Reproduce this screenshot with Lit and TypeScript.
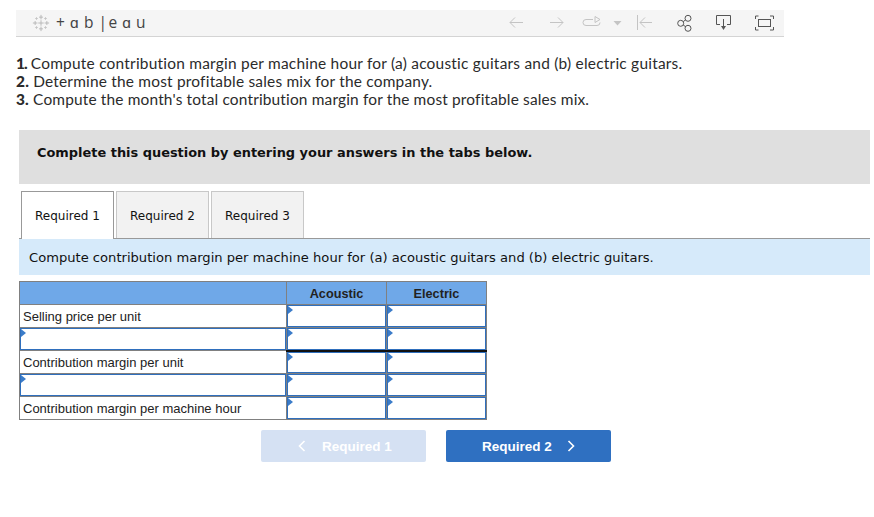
import { LitElement, html, css, svg } from "lit";
import { customElement } from "lit/decorators.js";

const logo = svg`<svg class="mark" width="18" height="18" viewBox="0 0 20 20" fill="none" stroke="#b4b4b4" stroke-width="1">
<path d="M10 1v5M7.800 3.500h4.400M10 14v5M7.800 16.500h4.400M1 10h5M3.500 7.800v4.400M14 10h5M16.500 7.800v4.400M10 7v6M7 10h6"/>
<path d="M5 3.500v3M3.500 5h3M15 3.500v3M13.500 5h3M5 13.500v3M3.500 15h3M15 13.500v3M13.500 15h3" stroke="#c4c4c4"/></svg>`;

@customElement("app-root")
export class AppRoot extends LitElement {
  static styles = css`
    :host { display: block; width: 874px; height: 517px; overflow: hidden; background: #fff; box-sizing: border-box; padding-top: 10px; font-family: "Liberation Sans", Arial, sans-serif; color: #222; }
    .bar { margin-left: 16px; width: 768px; height: 27px; box-sizing: border-box; background: #f5f5f5; border-bottom: 1px solid #d4d4d4; display: flex; align-items: center; padding-left: 16px; }
    .brand { display: flex; align-items: center; gap: 6px; font: 15.5px/1 "Open Sans", sans-serif; color: #444; }
    .brand span { letter-spacing: 5.2px; }
    .brand span.pipe { letter-spacing: 1.5px; }
    .brand span.tail { letter-spacing: 5px; }
    .brand .word { display: flex; letter-spacing: 0; }
    .tools { margin-left: auto; display: flex; height: 26px; align-self: flex-start; }
    .tools svg { display: block; }
    .questions { margin: 17px 0 0 16px; font: 15.45px/18px Lato, sans-serif; letter-spacing: 0.2px; color: #2b2b2b; }
    .questions b { font-weight: 900; }
    .questions b.one { letter-spacing: -1px; }
    .questions .first { letter-spacing: 0.23px; }
    .questions .last { letter-spacing: 0.16px; }
    .banner { margin: 22px 0 0 19px; width: 851px; height: 54px; box-sizing: border-box; background: #dfdfdf; display: flex; align-items: center; padding: 0 0 10px 18px; font: bold 12.93px "DejaVu Sans", sans-serif; color: #111; }
    .tabs { display: flex; gap: 2px; margin: 7px 0 0 21px; height: 48px; position: relative; z-index: 1; align-items: flex-start; }
    .tab { width: 93px; height: 47px; box-sizing: border-box; padding-top: 1px; background: #f2f2f2; border: 1px solid #c8c8c8; border-bottom: 0; display: flex; align-items: center; justify-content: center; font: 12px "DejaVu Sans", sans-serif; color: #111; }
    .tab.on { height: 48px; padding-top: 0; background: #fff; border-color: #999; }
    .info { margin: -1px 0 0 19px; height: 37px; box-sizing: border-box; border-top: 1px solid #999; background: #d6eafa; display: flex; align-items: center; padding-left: 10px; font: 13.1px "DejaVu Sans", sans-serif; color: #111; width: 851px; }
    table { margin: 6px 0 0 19px; border-collapse: collapse; table-layout: fixed; width: 467px; font: 13px "Liberation Sans", sans-serif; }
    col.a { width: 267px; } col.b { width: 100px; }
    td, th { height: 23px; padding: 0; border: 1px solid #808080; box-sizing: border-box; }
    th { background: #6fa8e8; font-size: 12.7px; color: #222; font-weight: bold; padding-top: 1px; }
    td.l { padding-left: 3px; color: #222; }
    td.i { position: relative; box-shadow: inset 0 0 0 1px #2f6fbd; }
    td.i::before { content: ""; position: absolute; left: 1px; top: 1px; border-left: 5px solid #3b7cc9; border-top: 4px solid transparent; border-bottom: 4px solid transparent; }
    tr.heavy td.v { border-bottom: 2px solid #111; }
    .nav { display: flex; gap: 20px; margin: 10px 0 0 261px; }
    .btn { width: 165px; height: 32px; box-sizing: border-box; border-radius: 2px; background: #2f70c1; color: #fff; font: bold 13.5px "Liberation Sans", sans-serif; display: flex; align-items: center; justify-content: center; gap: 15px; }
    .btn.off { background: #d5e1f3; gap: 16px; padding-left: 3px; }
    .btn svg { display: block; }
  `;

  row(label: string | null, heavy = false) {
    return html`<tr class=${heavy ? "heavy" : ""}>
      ${label ? html`<td class="l">${label}</td>` : html`<td class="i"></td>`}
      <td class="i v"></td><td class="i v"></td></tr>`;
  }

  render() {
    return html`
      <div class="bar">
        <div class="brand">${logo}<div class="word"><span>+ɑb</span><span class="pipe">|</span><span class="tail">eɑu</span></div></div>
        <div class="tools">
          <svg width="284" height="26" viewBox="500 10 284 26" fill="none" stroke="#c4c4c4" stroke-width="1">
            <path d="M510 22.500h13M515 17.500l-5 5 5 5M550 22.500h13M558 17.500l5 5-5 5"/>
            <path d="M593 19.500h-7a3 3 0 0 0 0 6h11a3 3 0 0 0 3-3"/>
            <path d="M595 16.500l5 3-5 3z"/>
            <path d="M613.500 21h8l-4 4.500z" fill="#c4c4c4" stroke="none"/>
            <path d="M637.500 15v15M640 22.500h12M645 17.500l-5 5 5 5"/>
            <g stroke="#555">
              <circle cx="680.700" cy="23.300" r="3"/><circle cx="688" cy="18.300" r="3"/><circle cx="688" cy="28.300" r="3"/>
              <path d="M683.200 21.600l2.300-1.600M683.200 25l2.300 1.600"/>
              <path d="M720 24.500h-3.500v-9h14v9H727M723.500 19v8"/>
              <path d="M721 26h5l-2.500 4z" fill="#555" stroke="none"/>
              <path d="M755.500 19v-3h3M770 16h3.500v3M755.500 27v3h3M773.500 27v3H770"/>
              <rect x="758.500" y="19.500" width="12" height="7"/>
            </g>
          </svg>
        </div>
      </div>
      <div class="questions">
        <div class="first"><b class="one">1.</b> Compute contribution margin per machine hour for (a) acoustic guitars and (b) electric guitars.</div>
        <div><b>2.</b> Determine the most profitable sales mix for the company.</div>
        <div class="last"><b>3.</b> Compute the month's total contribution margin for the most profitable sales mix.</div>
      </div>
      <div class="banner">Complete this question by entering your answers in the tabs below.</div>
      <div class="tabs">
        <div class="tab on">Required 1</div><div class="tab">Required 2</div><div class="tab">Required 3</div>
      </div>
      <div class="info">Compute contribution margin per machine hour for (a) acoustic guitars and (b) electric guitars.</div>
      <table>
        <colgroup><col class="a"/><col class="b"/><col class="b"/></colgroup>
        <tr><th></th><th>Acoustic</th><th>Electric</th></tr>
        ${this.row("Selling price per unit")}
        ${this.row(null, true)}
        ${this.row("Contribution margin per unit")}
        ${this.row(null)}
        ${this.row("Contribution margin per machine hour")}
      </table>
      <div class="nav">
        <div class="btn off"><svg width="8" height="12" viewBox="0 0 8 12" fill="none" stroke="#fff" stroke-width="1.6"><path d="M6.500 1l-5 5 5 5"/></svg>Required 1</div>
        <div class="btn">Required 2<svg width="8" height="12" viewBox="0 0 8 12" fill="none" stroke="#fff" stroke-width="1.6"><path d="M1.500 1l5 5-5 5"/></svg></div>
      </div>
    `;
  }
}
